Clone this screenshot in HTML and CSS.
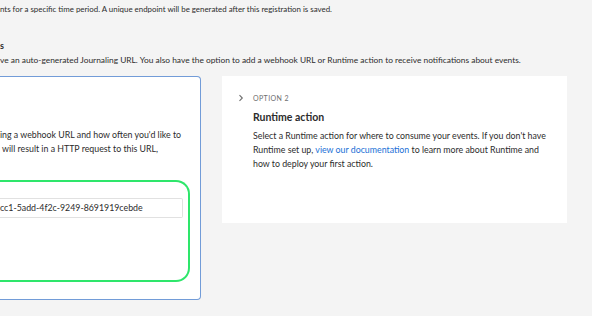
FILE: index.html
```html
<!DOCTYPE html>
<html lang="en">
	<head>
		<meta charset="UTF-8">
		<meta name="viewport" content="width=device-width, initial-scale=1.0">
		<title>Event registration</title>
		<link rel="stylesheet" href="styles.css">
	</head>
	<body>
		<div class="page">
			<!--Intro copy, clipped on the left by the viewport-->
			<p class="intro">nts for a specific time period. A unique endpoint will be generated after this registration is saved.</p>

			<h2 class="section-title">s</h2>
			<p class="section-desc">ve an auto-generated Journaling URL. You also have the option to add a webhook URL or Runtime action to receive notifications about events.</p>

			<div class="options">
				<!--Option 1, selected-->
				<div class="option-card option-card--selected">
					<p class="option-text">ing a webhook URL and how often you'd like to<br>&nbsp;will result in a HTTP request to this URL,</p>
					<div class="field-group">
						<div class="text-field">cc1-5add-4f2c-9249-8691919cebde</div>
					</div>
				</div>

				<!--Option 2-->
				<div class="option-card">
					<div class="option-head">
						<svg class="chevron" width="8" height="8" viewBox="0 0 8 8"><path d="M2.5 1.2 L5.3 4 L2.5 6.8" fill="none" stroke="#6e6e6e" stroke-width="1.1"/></svg>
						<span class="option-label">OPTION 2</span>
					</div>
					<div class="option-body">
						<h3 class="option-title">Runtime action</h3>
						<p class="option-text">Select a Runtime action for where to consume your events. If you don't have Runtime set up, <a href="#">view our documentation</a> to learn more about Runtime and how to deploy your first action.</p>
					</div>
				</div>
			</div>
		</div>
	</body>
</html>
```

FILE: styles.css
```css
* {
	box-sizing: border-box;
}

body {
	margin: 0;
	background: #f4f4f4;
	color: #2c2c2c;
	font-family: Lato, "Noto Sans", sans-serif;
	font-size: 8.4px;
	overflow: hidden;
}

.page {
	padding-top: 2px;
}

p, h2, h3 {
	margin: 0;
	line-height: 14px;
}

.intro {
	font-size: 7.9px;
	margin-bottom: 23px;
}

.section-title {
	font-size: 9px;
	font-weight: 700;
}

.section-desc {
	margin-bottom: 9px;
}

/* Two option cards side by side */
.options {
	display: grid;
	grid-template-columns: 201px 345px;
	column-gap: 21px;
	align-items: start;
}

.option-card {
	background: #fff;
	height: 147px;
	padding: 18px 12px 0 15px;
}

.option-card .option-text {
	font-size: 8.8px;
}

.option-card--selected {
	height: 224px;
	border: 1px solid #729cd8;
	border-left: none;
	border-radius: 0 4px 4px 0;
	padding: 51px 10px 0 0;
}

.option-head {
	display: flex;
	align-items: center;
	gap: 8px;
	height: 8px;
}

.option-label {
	font-size: 7px;
	letter-spacing: 0.4px;
	color: #6e6e6e;
}

.option-body {
	padding-left: 16px;
	padding-top: 7px;
}

.option-title {
	font-size: 10.5px;
	font-weight: 700;
	line-height: 16px;
	margin-bottom: 4px;
}

.option-text a {
	color: #1a6fd6;
	text-decoration: none;
}

/* Green highlighted field area */
.field-group {
	margin-top: 24px;
	height: 102px;
	border: 2px solid #2ee66b;
	border-left: none;
	border-radius: 0 14px 14px 0;
	padding: 16px 5px 0 0;
}

.text-field {
	height: 20px;
	line-height: 18px;
	border: 1px solid #e1e1e1;
	border-left: none;
	border-radius: 0 2px 2px 0;
	font-size: 8.8px;
}
```
